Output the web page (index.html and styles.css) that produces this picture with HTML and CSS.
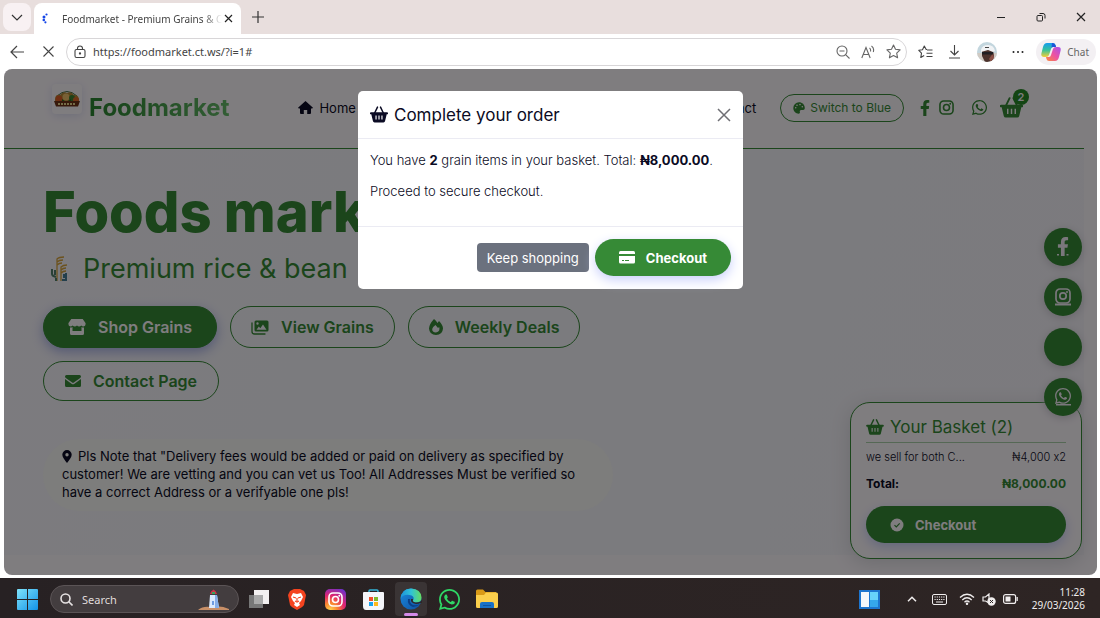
FILE: index.html
```html
<!DOCTYPE html>
<html lang="en">
<head>
<meta charset="utf-8">
<title>Foodmarket - Premium Grains</title>
<link rel="stylesheet" href="styles.css">
</head>
<body>
<svg class="defs" aria-hidden="true">
  <symbol id="basket" viewBox="0 0 24 22"><path d="M6.2 9 10 1.2M17.8 9 14 1.2" fill="none" stroke="currentColor" stroke-width="2" stroke-linecap="round"/><path fill="currentColor" fill-rule="evenodd" d="M1.2 8h21.600a1.200 1.200 0 0 1 0 2.800h-.5l-2.200 9a2.200 2.200 0 0 1-2.200 1.700H6.100a2.200 2.200 0 0 1-2.200-1.700l-2.200-9h-.5a1.200 1.200 0 0 1 0-2.800zM7.300 12.300v5.400h1.500v-5.400zM11.250 12.300v5.400h1.500v-5.400zM15.200 12.300v5.400h1.500v-5.400z"/></symbol>
  <symbol id="facebook" viewBox="0 0 320 512"><path fill="currentColor" d="M279.140 288l14.220-92.660h-88.910v-60.130c0-25.350 12.420-50.060 52.240-50.060h40.420V6.260S260.430 0 225.360 0c-73.220 0-121.080 44.380-121.080 124.720v70.620H22.890V288h81.390v224h100.170V288z"/></symbol>
  <symbol id="instagram" viewBox="0 0 16 16"><g fill="none" stroke="currentColor" stroke-width="1.700"><rect x="1" y="1" width="14" height="14" rx="4"/><circle cx="8" cy="8" r="3.200"/></g><circle cx="12" cy="4" r="1" fill="currentColor"/></symbol>
  <symbol id="whatsapp" viewBox="0 32 448 448"><path fill="currentColor" d="M380.900 97.100C339 55.100 283.200 32 223.900 32c-122.400 0-222 99.600-222 222 0 39.100 10.200 77.300 29.600 111L0 480l117.700-30.900c32.400 17.700 68.900 27 106.100 27h.1c122.300 0 224.100-99.600 224.100-222 0-59.300-25.200-115-67.100-157zm-157 341.600c-33.200 0-65.700-8.900-94-25.700l-6.700-4-69.800 18.300L72 359.200l-4.400-7c-18.500-29.400-28.200-63.300-28.200-98.200 0-101.700 82.800-184.500 184.600-184.500 49.300 0 95.600 19.200 130.400 54.100 34.800 34.900 56.200 81.200 56.100 130.500 0 101.800-84.900 184.600-186.600 184.600zm101.200-138.200c-5.500-2.800-32.800-16.200-37.900-18-5.100-1.900-8.800-2.800-12.500 2.800-3.700 5.600-14.300 18-17.600 21.800-3.200 3.700-6.500 4.200-12 1.400-32.600-16.300-54-29.100-75.500-66-5.700-9.800 5.700-9.100 16.300-30.300 1.800-3.700.9-6.900-.5-9.700-1.400-2.800-12.500-30.100-17.100-41.200-4.500-10.800-9.100-9.300-12.500-9.500-3.200-.2-6.900-.2-10.600-.2-3.700 0-9.700 1.400-14.800 6.900-5.100 5.600-19.400 19-19.400 46.300 0 27.300 19.900 53.700 22.600 57.400 2.800 3.700 39.100 59.700 94.800 83.800 35.200 15.200 49 16.500 66.600 13.900 10.700-1.600 32.800-13.400 37.400-26.400 4.600-13 4.600-24.100 3.200-26.400-1.300-2.500-5-3.900-10.500-6.600z"/></symbol>
</svg>

<header class="titlebar">
  <button class="tab-menu" aria-label="Tab actions"><svg width="12" height="12" viewBox="0 0 12 12" fill="none" stroke="#333" stroke-width="1.200"><path d="M1 4l5 5 5-5"/></svg></button>
  <div class="tab">
    <svg width="12" height="12" viewBox="0 0 12 12" fill="#1546e8"><circle cx="4.500" cy="1.500" r="1.100"/><circle cx="2" cy="4" r="1.500"/><circle cx="1.800" cy="7" r="1.300"/><circle cx="3.400" cy="9.300" r="1.100"/></svg>
    <span class="tab-title">Foodmarket - Premium Grains &amp; C</span>
    <button class="plain" aria-label="Close tab"><svg width="9" height="9" viewBox="0 0 9 9" fill="none" stroke="#222" stroke-width="1.200"><path d="M1 1l7 7M8 1L1 8"/></svg></button>
  </div>
  <button class="plain new-tab" aria-label="New tab"><svg width="14" height="14" viewBox="0 0 14 14" fill="none" stroke="#333" stroke-width="1.200"><path d="M7 1v12M1 7h12"/></svg></button>
  <div class="window-controls">
    <button class="plain" aria-label="Minimize"><svg width="10" height="10" viewBox="0 0 10 10" stroke="#222"><path d="M1 5.500h8"/></svg></button>
    <button class="plain" aria-label="Restore"><svg width="10" height="10" viewBox="0 0 10 10" fill="none" stroke="#222"><rect x="1" y="3.500" width="5.500" height="5.500" rx="1"/><path d="M3.500 1.500h3.500a2 2 0 0 1 2 2v3"/></svg></button>
    <button class="plain" aria-label="Close"><svg width="10" height="10" viewBox="0 0 10 10" fill="none" stroke="#222" stroke-width="1.200"><path d="M1 1l8 8M9 1L1 9"/></svg></button>
  </div>
</header>

<div class="toolbar">
  <button class="plain" aria-label="Back"><svg width="14" height="14" viewBox="0 0 14 14" fill="none" stroke="#444" stroke-width="1.200"><path d="M14 7H1M7 1L1 7l6 6"/></svg></button>
  <button class="plain stop" aria-label="Stop"><svg width="11" height="11" viewBox="0 0 11 11" fill="none" stroke="#444" stroke-width="1.100"><path d="M.5.5l10 10M10.500.5l-10 10"/></svg></button>
  <div class="address">
    <svg width="12" height="14" viewBox="0 0 12 14" fill="none" stroke="#444" stroke-width="1.100"><rect x="1" y="4.500" width="10" height="8" rx="1.500"/><path d="M3.500 4.500V3.500a2.500 2.500 0 0 1 5 0v1"/><circle cx="6" cy="8.500" r=".6" fill="#333"/></svg>
    <input class="url" type="text" value="https://foodmarket.ct.ws/?i=1#" aria-label="Address">
    <button class="plain" aria-label="Zoom out"><svg width="14" height="14" viewBox="0 0 14 14" fill="none" stroke="#666" stroke-width="1.100"><circle cx="6" cy="6" r="5"/><path d="M9.600 9.600L13.500 13.500M3.500 6h5"/></svg></button>
    <button class="plain" aria-label="Read aloud"><svg width="14" height="14" viewBox="0 0 14 14" fill="none" stroke="#666" stroke-width="1.100"><path d="M.8 13L5 2.500 9.200 13M2.200 9.500h5.600M8.500 3q1.500 1 1 3.500M10.500 1q3 2 1.800 6"/></svg></button>
    <button class="plain" aria-label="Favourite"><svg width="15" height="15" viewBox="0 0 15 15" fill="none" stroke="#666" stroke-width="1.100" stroke-linejoin="round"><path d="M7.500 1l2 4.300 4.600.6-3.400 3.200.9 4.700-4.100-2.300-4.100 2.300.9-4.700L.9 5.900l4.600-.6z"/></svg></button>
  </div>
  <div class="tools">
    <button class="plain" aria-label="Favourites"><svg width="15" height="14" viewBox="0 0 15 14" fill="none" stroke="#444" stroke-width="1.100" stroke-linejoin="round"><path d="M9 4.500L8.200 4.400 6.300 1 4.500 4.700.8 5.300l2.700 2.800L2.800 12.500l3.400-2M9 5h5.500M8.500 8.300h6M8.500 11.500h6"/></svg></button>
    <button class="plain" aria-label="Downloads"><svg width="14" height="15" viewBox="0 0 14 15" fill="none" stroke="#444" stroke-width="1.100"><path d="M6.500 1v10M2.500 7l4 4 4-4M1 14h11"/></svg></button>
    <button class="plain" aria-label="Profile"><svg width="20" height="20" viewBox="0 0 20 20"><defs><clipPath id="face"><circle cx="10" cy="10" r="10"/></clipPath></defs><g clip-path="url(#face)"><path fill="#c3d6de" d="M0 0h20v20H0z"/><path fill="#d0cac3" d="M0 11h20v9H0z"/><path fill="#4b322c" d="M5 8h11l1 6-2 6H8l-3-6z"/><path fill="#8b5148" d="M12 17l4-6 1 5-3 4z"/><path fill="#211f22" d="M5 10h11v2.500H5z"/><path fill="#f1f3f5" d="M4 8Q5 3 11 3t7 6l-2 1-5-2-7 2z"/><path fill="#444" d="M8 5h4v1H8z"/></g></svg></button>
    <button class="plain" aria-label="More"><svg width="12" height="4" viewBox="0 0 12 4" fill="#222"><circle cx="1.500" cy="2" r="1"/><circle cx="6" cy="2" r="1"/><circle cx="10.500" cy="2" r="1"/></svg></button>
    <button class="chat"><svg width="20" height="18" viewBox="0 0 20 18"><defs><linearGradient id="c1" x2="0" y2="1"><stop stop-color="#159cf0"/><stop offset=".5" stop-color="#35c29b"/><stop offset="1" stop-color="#f6cf35"/></linearGradient><linearGradient id="c2" x1="1" x2="0" y2="1"><stop stop-color="#a651ec"/><stop offset=".5" stop-color="#ec52a3"/><stop offset="1" stop-color="#fb8a3b"/></linearGradient></defs><path fill="url(#c1)" d="M6 0h6q2 0 2.500 2L15 4h-3q-1.500 0-2 2L8 12q-.5 2-3 2H3q-3.500 0-2.500-4L2 4q1-4 4-4z"/><path fill="url(#c2)" d="M14 18H8q-2 0-2.500-2L5 14h3q1.500 0 2-2l2-6q.5-2 3-2h2q3.500 0 2.500 4L18 14q-1 4-4 4z"/><path fill="#1b54d8" d="M11 0q2.500 0 3.500 2L15 4h-3q-1 0-1.500 1z"/></svg>Chat</button>
  </div>
</div>

<div class="page">
  <div class="content">
    <header class="site-header">
      <a class="brand" href="#">
        <span class="brand-logo"><svg width="28" height="16" viewBox="0 0 28 16"><path d="M4 5Q14-4 24 5" fill="none" stroke="#48714d"/><path fill="#b58a36" d="M2 9Q2 3 7 4q3-4 7-2 4-2 7 2 5-1 5 6v3H2z"/><circle cx="6" cy="8" r="3.500" fill="#dc5d24"/><circle cx="13" cy="6" r="3.500" fill="#f0c06a"/><circle cx="19" cy="7" r="3" fill="#3f8533"/><circle cx="23" cy="9" r="3" fill="#e16b2a"/><path fill="#2d6a26" d="M9 8l4 3 5-3v4H9z"/><path fill="#6e3217" d="M1 10h26l-2 5.500H3z"/><path d="M5 13h18" stroke="#ead98f" stroke-width="2" stroke-dasharray="2 1"/></svg></span>
        <span class="brand-name">Foodmarket</span>
      </a>
      <nav class="site-nav">
        <a href="#"><svg width="15" height="13" viewBox="0 0 15 13" fill="currentColor"><path d="M7.500 0L15 6.700l-.8.9H13V12a1 1 0 0 1-1 1H9.200V9H5.800v4H3a1 1 0 0 1-1-1V7.600H.8L0 6.700z"/></svg>Home</a>
        <a href="#">Contact</a>
      </nav>
      <button class="theme"><svg width="12" height="12" viewBox="0 0 12 12"><path fill="currentColor" fill-rule="evenodd" d="M6 .3A5.700 5.700 0 0 0 .3 6c0 3.200 2.500 5.700 5.400 5.700 1 0 1.500-.8 1.200-1.600C6.500 9 7 8 8.100 8h2c1 0 1.700-.7 1.700-2C11.800 2.700 9.200.3 6 .3zM2.700 5a.8.800 0 1 1 0 1.600.8.800 0 0 1 0-1.600zM4 2.400A.8.800 0 1 1 4 4a.8.800 0 0 1 0-1.600zM7 1.800a.8.800 0 1 1 0 1.600.8.800 0 0 1 0-1.600zM9.300 4a.8.800 0 1 1 0 1.600.8.800 0 0 1 0-1.600z"/></svg>Switch to Blue</button>
      <div class="header-social">
        <a href="#" aria-label="Facebook"><svg width="10" height="16"><use href="#facebook"/></svg></a>
        <a href="#" aria-label="Instagram"><svg width="15" height="15"><use href="#instagram"/></svg></a>
        <a class="wa" href="#" aria-label="WhatsApp"><svg width="15" height="15"><use href="#whatsapp"/></svg></a>
        <a class="header-basket" href="#" aria-label="Basket"><svg width="23" height="21"><use href="#basket"/></svg><span class="badge">2</span></a>
      </div>
    </header>
    <main class="hero">
      <h1>Foods mark</h1>
      <p class="lead"><svg width="18" height="26" viewBox="0 0 18 26" fill="none" stroke-width="1.300"><g stroke="#d8a53d"><path d="M7 25V3q2-2 7-2M7 6q2-2 6-2M7 9q2-2 5-2M11 25V11q2-2 6-2M11 14q2-2 5-2M11 17q2-2 5-2"/></g><path stroke="#52806c" stroke-width="2" d="M2 13v5q0 2 4 3M5 14v5M6 22v3"/><path stroke="#477e98" stroke-width="2" d="M16 17v7h-4M14 18v4"/></svg>Premium rice &amp; bean</p>
      <div class="actions">
        <a class="pill solid" href="#"><svg width="18" height="16" viewBox="0 0 18 16" fill="currentColor"><path d="M3.300 0h11.400L17.500 4q.6 3-2 3.500-1.500 0-2.200-1-1 1-2.200 1T9 6.500Q8 7.500 6.800 7.500T4.600 6.500q-.8 1-2.200 1Q0 7 .5 4zM2 8.500q1.500.2 2.500-.5v4h9V8q1 .7 2.500.5v6q0 1.500-1.500 1.500h-11Q2 16 2 14.500z"/></svg>Shop Grains</a>
        <a class="pill" href="#"><svg width="18" height="15" viewBox="0 0 18 15"><path fill="none" stroke="currentColor" stroke-width="1.300" stroke-linecap="round" d="M1 3v8.500Q1 14 3.500 14H14"/><path fill="currentColor" fill-rule="evenodd" d="M5 .5h11q1.500 0 1.500 1.500v8q0 1.500-1.500 1.500H5Q3.500 11.500 3.500 10V2Q3.500.5 5 .5zM5.500 9.700h10L12 4.500 9.300 8.300 7.800 6.500zM6.500 2.300a1.200 1.200 0 1 0 0 2.400 1.200 1.200 0 0 0 0-2.400z"/></svg>View Grains</a>
        <a class="pill" href="#"><svg width="14" height="16" viewBox="0 0 14 16"><path fill="currentColor" fill-rule="evenodd" d="M5 0q2 1.500 3.500 4L10 2q4 4 4 7.500Q13.500 16 7 16T0 9.500Q0 5.500 5 0zM6.500 6L9 9l1.200-1q1.300 4.500-3.200 5.500-4-.4-3.800-3.500Q3.500 8 6.500 6z"/></svg>Weekly Deals</a>
        <a class="pill compact" href="#"><svg width="16" height="12" viewBox="0 0 16 12" fill="currentColor"><path d="M1.500 0h13Q16 0 16 1.500 16 2.300 15.200 3L8.800 7.600q-.8.600-1.600 0L.8 3Q0 2.300 0 1.500 0 0 1.500 0zM0 4l6.500 4.700q1.500 1 3 0L16 4v6.500q0 1.500-1.500 1.500h-13Q0 12 0 10.500z"/></svg>Contact Page</a>
      </div>
      <p class="note"><svg width="10" height="13" viewBox="0 0 10 13"><path fill="currentColor" fill-rule="evenodd" d="M5 0a4.700 4.700 0 0 1 4.700 4.700C9.700 7 7 10.500 5 13 3 10.500.3 7 .3 4.700A4.700 4.700 0 0 1 5 0zM5 3a1.700 1.700 0 1 0 0 3.400A1.700 1.700 0 0 0 5 3z"/></svg>Pls Note that "Delivery fees would be added or paid on delivery as specified by customer! We are vetting and you can vet us Too! All Addresses Must be verified so have a correct Address or a verifyable one pls!</p>
    </main>
  </div>

  <aside class="basket-card">
    <h2><svg width="18" height="16"><use href="#basket"/></svg>Your Basket (2)</h2>
    <div class="row item"><span>we sell for both C...</span><span>₦4,000 x2</span></div>
    <div class="row total"><span>Total:</span><span class="sum">₦8,000.00</span></div>
    <button class="cta wide"><svg width="14" height="14" viewBox="0 0 14 14"><circle cx="7" cy="7" r="6.500" fill="currentColor"/><path d="M4.500 7.200L6.300 9l3.400-3.600" fill="none" stroke="#368a36" stroke-width="1.200"/></svg>Checkout</button>
  </aside>

  <div class="social-rail">
    <a href="#" aria-label="Facebook"><svg width="18" height="20" viewBox="0 0 18 20"><use href="#facebook" x="3" y="0" width="12" height="19"/><path fill="currentColor" d="M3 17h2v1.500H3zM12.500 17h2v1.500h-2z"/></svg></a>
    <a href="#" aria-label="Instagram"><svg width="18" height="18" viewBox="0 0 18 18"><use href="#instagram" x="1" y="0" width="16" height="16"/><path fill="currentColor" d="M1 15.500h16V17.500H1z"/></svg></a>
    <a href="#" aria-label="More"></a>
    <a href="#" aria-label="WhatsApp"><svg width="18" height="18" viewBox="0 0 18 18"><use href="#whatsapp" x="1" y="0" width="16" height="16"/><path fill="currentColor" d="M2 16h15v1.500H2z"/></svg></a>
  </div>

  <div class="backdrop"></div>
  <section class="modal" role="dialog" aria-labelledby="modal-title">
    <header class="modal-head">
      <h2 id="modal-title"><svg width="18" height="17"><use href="#basket"/></svg>Complete your order</h2>
      <button class="plain" aria-label="Close"><svg width="14" height="14" viewBox="0 0 14 14" fill="none" stroke="#6f6f74" stroke-width="1.500"><path d="M1 1l12 12M13 1L1 13"/></svg></button>
    </header>
    <div class="modal-body">
      <p>You have <strong>2</strong> grain items in your basket. Total: <strong>₦8,000.00</strong>.</p>
      <p>Proceed to secure checkout.</p>
    </div>
    <footer class="modal-foot">
      <button class="keep">Keep shopping</button>
      <button class="cta"><svg width="16" height="13" viewBox="0 0 16 13" fill="currentColor"><path d="M1.500 0h13Q16 0 16 1.500V3H0V1.500Q0 0 1.500 0z"/><path fill-rule="evenodd" d="M0 5h16v6q0 1.500-1.500 1.500h-13Q0 12.500 0 11zM3 9v1h2V9zM6 9v1h4V9z"/></svg>Checkout</button>
    </footer>
  </section>
</div>

<footer class="taskbar">
  <button class="plain" aria-label="Start"><svg width="21" height="21" viewBox="0 0 21 21"><defs><linearGradient id="win" x2="1" y2="1"><stop stop-color="#7fe3fb"/><stop offset="1" stop-color="#1292e8"/></linearGradient></defs><path fill="url(#win)" d="M1 0h9v10H0V1q0-1 1-1zM11 0h9q1 0 1 1v9H11zM0 11h10v10H1q-1 0-1-1zM11 11h10v9q0 1-1 1h-9z"/></svg></button>
  <div class="search">
    <svg width="13" height="13" viewBox="0 0 13 13" fill="none" stroke="#e6e2e2" stroke-width="1.600"><circle cx="5.500" cy="5.500" r="4.500"/><path d="M8.800 8.800l3.700 3.700"/></svg>
    <input type="text" placeholder="Search" aria-label="Search">
    <svg width="31" height="21" viewBox="0 0 31 21"><path fill="#c88f67" d="M0 21q5-4 12-3 11-2 19 2v1z"/><path fill="#dceafd" d="M12 6h7l2 13H11z"/><path fill="#86aee8" d="M17 6h2l2 13h-4z"/><path fill="#cf3346" d="M12 5q.5-3 3.500-4.500Q18.500 2 19 5z"/><path fill="#3aa35d" d="M14 3h3v2h-3z"/><path fill="#6e9be0" d="M14 12h2v4h-2z"/></svg>
  </div>
  <div class="apps">
    <button class="app" aria-label="Task view"><svg width="22" height="20" viewBox="0 0 22 20"><path fill="#f3f0f0" d="M6 1h15v14H6z"/><path fill="#777" d="M1 6h14v13H1z"/><path fill="#aaa" d="M6 6h9v9H6z"/></svg></button>
    <button class="app" aria-label="Brave"><svg width="18" height="21" viewBox="0 0 18 21"><path fill="#f4431f" d="M4 1l2-1h6l2 1 2 1 2 4-2 10q-1 2-7 5-6-3-7-5L0 6l2-4z"/><path fill="#fff" d="M5 4l4 1 4-1 2 4-2 4-2 2 1 2-3 2-3-2 1-2-2-2-2-4z"/><path stroke="#f4431f" fill="none" stroke-width="1.200" d="M5 8l3 1M13 8l-3 1M9 9v3M7 12l2 1 2-1"/></svg></button>
    <button class="app" aria-label="Instagram"><svg width="21" height="21" viewBox="0 0 21 21"><defs><radialGradient id="ig" cx=".25" cy="1" r="1.150"><stop stop-color="#ffd44f"/><stop offset=".3" stop-color="#f98430"/><stop offset=".6" stop-color="#e1246f"/><stop offset="1" stop-color="#6a32cf"/></radialGradient></defs><rect width="21" height="21" rx="5" fill="url(#ig)"/><g fill="none" stroke="#fff" stroke-width="1.600"><rect x="4" y="4" width="13" height="13" rx="4"/><circle cx="10.500" cy="10.500" r="3"/></g><circle cx="14.300" cy="6.700" r="1" fill="#fff"/></svg></button>
    <button class="app" aria-label="Store"><svg width="21" height="21" viewBox="0 0 21 21"><path d="M6 5V2q0-1 1-1h7q1 0 1 1v3" fill="none" stroke="#33b4d8" stroke-width="1.500"/><path fill="#f5f6fa" d="M1 3h19q1 0 1 1v13q0 4-3 4H3q-3 0-3-4V4q0-1 1-1z"/><path fill="#f04f2a" d="M6 8h4v4H6z"/><path fill="#7fba2c" d="M11 8h4v4h-4z"/><path fill="#19a4ef" d="M6 13h4v4H6z"/><path fill="#ffb91b" d="M11 13h4v4h-4z"/></svg></button>
    <button class="app active" aria-label="Edge"><svg width="22" height="22" viewBox="0 0 22 22"><defs><linearGradient id="e1" x2="1"><stop stop-color="#1c91dc"/><stop offset=".5" stop-color="#2fc2d8"/><stop offset="1" stop-color="#64dd62"/></linearGradient><linearGradient id="e2" x2="1" y2="1"><stop stop-color="#1a8be0"/><stop offset="1" stop-color="#0f4f9e"/></linearGradient></defs><circle cx="11" cy="11" r="10.500" fill="url(#e2)"/><path fill="url(#e1)" d="M.5 11Q1 1 11 .5q10 .5 10.500 9 0 5-6 5-4-.5-2-3 1-4-4-4.500Q3 6 .5 11z"/><path fill="#0b3f86" d="M8 11q-1 6 5 8 4 0 7-3-3 2-7 1-4-2-3-6z"/><path fill="#2d2829" d="M11 11q-1 4 5 5 3 0 4-1l2 0v-3q-2 3-6.500 2.500Q12 14 13 11z"/></svg></button>
    <button class="app" aria-label="WhatsApp"><svg class="wa-app" width="21" height="21"><use href="#whatsapp"/></svg></button>
    <button class="app" aria-label="Files"><svg width="22" height="20" viewBox="0 0 22 20"><path fill="#d99a17" d="M0 2q0-1.500 1.500-1.500H7L9.500 3H20v6H0z"/><path fill="#fbcf4c" d="M0 6h8l2-2.500h10.500Q22 3.500 22 5v12.500q0 1.500-1.500 1.500h-19Q0 19 0 17.500z"/><path fill="#1771c9" d="M4 19v-4q0-2 2-2h10q2 0 2 2v4z"/><path fill="#0f559f" d="M7 16h8v1H7z"/></svg></button>
  </div>
  <div class="tray">
    <svg class="widgets" width="21" height="19" viewBox="0 0 21 19"><path fill="#1d75cf" d="M0 0h21v19H0z"/><path fill="#f4f7fb" d="M2 2h8v15H2z"/><path fill="#67d2fa" d="M11 2h8v8h-8z"/><path fill="#35a7eb" d="M11 10h8v7h-8z"/></svg>
    <svg class="caret" width="10" height="6" viewBox="0 0 10 6" fill="none" stroke="#f0eded" stroke-width="1.500"><path d="M1 5.200L5 1.200l4 4"/></svg>
    <svg class="keyboard" width="15" height="11" viewBox="0 0 15 11" fill="none" stroke="#f0eded"><rect x=".5" y=".5" width="14" height="10" rx="1.500"/><path d="M2.500 3h10M2.500 5.500h10" stroke-dasharray="1.200 1"/><path d="M4 8h7"/></svg>
    <svg width="16" height="12" viewBox="0 0 16 12" fill="none" stroke="#f0eded" stroke-width="1.300"><path d="M1 4.500q7-6.500 14 0M3.300 7q4.700-4.500 9.400 0M5.500 9.200q2.500-2.500 5 0"/><circle cx="8" cy="10.800" r=".6" fill="#f0eded"/></svg>
    <svg width="14" height="13" viewBox="0 0 14 13"><path d="M1 4h2.500L7 1v9L3.500 8H1z" fill="none" stroke="#f0eded" stroke-width="1.200"/><circle cx="9.500" cy="8.500" r="4.200" fill="#f0eded"/><path d="M8 7l3 3M11 7l-3 3" stroke="#2d2524"/></svg>
    <svg width="15" height="10" viewBox="0 0 15 10"><rect x=".6" y=".6" width="12" height="8.800" rx="2" fill="none" stroke="#f0eded" stroke-width="1.200"/><path fill="#f0eded" d="M2.500 2.500h5v5h-5zM13.500 3h1.300v4h-1.300z"/></svg>
    <div class="clock"><span>11:28</span><span>29/03/2026</span></div>
  </div>
</footer>
</body>
</html>
```
FILE: styles.css
```css
* { box-sizing: border-box; }

:root {
  --green: #368a36;
  --ink: #0b0b24;
  --site: Inter, "Open Sans", sans-serif;
  --system: "Noto Sans", "Open Sans", sans-serif;
}

body {
  margin: 0;
  min-height: 100vh;
  display: flex;
  flex-direction: column;
  background: #fff;
  font-family: var(--system);
  font-size: 10px;
  color: #444;
}

svg { display: block; flex: none; }
.defs { position: absolute; width: 0; height: 0; }
h1, h2, p { margin: 0; }
a { color: inherit; text-decoration: none; }
button, input { font: inherit; color: inherit; }
button { cursor: pointer; }
.plain { border: 0; padding: 0; background: none; display: flex; }

/* Browser frame */
.titlebar { display: flex; align-items: center; height: 34px; padding-left: 3px; background: #e8dedd; }
.tab-menu { width: 28px; height: 28px; border: 0; border-radius: 8px; background: #f8f1f3; display: grid; place-items: center; }
.tab { align-self: flex-end; display: flex; align-items: center; width: 207px; height: 31px; margin-left: 3px; padding: 0 10px 0 8px; background: #fff; border-radius: 8px 8px 0 0; }
.tab-title { flex: 1; margin: 0 2px 0 8px; white-space: nowrap; mask-image: linear-gradient(90deg, #000 88%, transparent); }
.new-tab { margin-left: 10px; }
.window-controls { display: flex; gap: 30px; margin-left: auto; padding-right: 14px; }

.toolbar { display: flex; align-items: center; height: 35px; padding: 0 4px 0 10px; background: #fff; }
.stop { margin-left: 19px; }
.address { flex: 1; display: flex; align-items: center; gap: 11px; height: 28px; margin: 0 11px 0 12px; padding: 0 5px 0 7px; border: 1px solid #d8d6d8; border-radius: 14px; }
.url { flex: 1; min-width: 0; border: 0; padding: 0; margin-left: -4px; background: none; font-size: 11px; outline: 0; }
.tools { display: flex; align-items: center; gap: 15px; }
.chat { display: flex; align-items: center; gap: 6px; height: 26px; margin-left: -3px; padding: 0 7px 0 5px; border: 0; border-radius: 13px; background: #f3f0f3; color: #666; }

/* Web page */
.page { position: relative; flex: 1; margin: 0 3px 3px 4px; overflow: hidden; border-radius: 8px; background: #fffaff; font-family: var(--site); font-feature-settings: "calt" 0; color: var(--ink); }
.content { height: 100%; margin-right: 13px; background: #fafafa; }
.site-header { display: flex; align-items: center; height: 80px; padding: 0 61px 2px 48px; background: #fffaff; border-bottom: 1px solid var(--green); }
.brand { display: flex; align-items: center; gap: 7px; }
.brand-logo { display: grid; place-items: center; width: 30px; height: 30px; margin-bottom: 18px; border-radius: 4px; background: #fffaff; box-shadow: 0 2px 8px #dfdff4; }
.brand-name { font-size: 24px; font-weight: 700; line-height: 30px; color: transparent; background: linear-gradient(90deg, #2a8530, #66bb6a); background-clip: text; }
.site-nav { flex: 1; display: flex; justify-content: space-between; margin: 0 24px 0 69px; font-size: 13px; }
.site-nav a { display: flex; align-items: center; gap: 6px; }
.theme { display: flex; align-items: center; justify-content: center; gap: 5px; height: 28px; padding: 0 12px; border: 1px solid var(--green); border-radius: 14px; background: none; color: var(--green); font-size: 12px; }
.header-social { display: flex; align-items: center; gap: 9px; margin-left: 16px; color: var(--green); }
.wa { margin-left: 9px; }
.header-basket { position: relative; margin-left: 4px; }
.badge { position: absolute; top: -8px; right: -6px; width: 16px; height: 16px; border-radius: 50%; background: #268a26; color: #fffaff; font-size: 11px; font-weight: 600; line-height: 16px; text-align: center; }

.hero { padding: 33px 39px 44px; background: linear-gradient(110deg, #f9f6fe, #f6f7fc 45%, #f8f5fc); color: var(--green); }
h1 { font-size: 56px; font-weight: 800; line-height: 60px; }
.lead { display: flex; align-items: center; gap: 15px; margin-top: 9px; padding-left: 7px; font-size: 27px; line-height: 36px; }
.actions { display: flex; flex-wrap: wrap; gap: 13px; max-width: 560px; margin-top: 19px; }
.pill { display: flex; align-items: center; gap: 12px; height: 42px; padding: 0 20px; border: 1px solid var(--green); border-radius: 21px; font-size: 16px; font-weight: 600; }
.pill.solid { padding: 0 24px; background: var(--green); color: #fffaff; box-shadow: 0 4px 12px #a9b2e8; }
.pill.compact { height: 40px; padding: 0 21px; }
.note { max-width: 570px; margin-top: 38px; padding: 8px 19px 10px; border-radius: 36px; background: #fafaf8; color: var(--ink); font-size: 13px; line-height: 18px; }
.note svg { display: inline-block; margin-right: 6px; vertical-align: -2px; }

.basket-card { position: absolute; right: 15px; bottom: 16px; width: 232px; padding: 14px 15px 15px; border: 1px solid var(--green); border-radius: 20px; background: #fffaff; box-shadow: 0 4px 20px #d8d6dd; }
.basket-card h2 { display: flex; align-items: center; gap: 6px; padding-bottom: 5px; border-bottom: 1px solid #abd0ab; color: var(--green); font-size: 17px; font-weight: 400; line-height: 20px; }
.row { display: flex; justify-content: space-between; }
.item { margin-top: 6px; font-size: 11px; font-weight: 300; line-height: 16px; }
.total { margin-top: 10px; font-size: 12px; font-weight: 700; line-height: 18px; }
.sum { color: var(--green); }
.cta { display: flex; align-items: center; gap: 11px; height: 37px; padding: 0 24px; border: 0; border-radius: 19px; background: var(--green); color: #fff; font-size: 13px; font-weight: 700; box-shadow: 0 4px 12px #c9d0fb; }
.cta.wide { width: 100%; margin-top: 13px; color: #fffaff; }

.social-rail { position: absolute; right: 15px; bottom: 159px; display: grid; gap: 12px; }
.social-rail a { display: grid; place-items: center; width: 38px; height: 38px; border-radius: 50%; background: var(--green); color: #f4eef8; box-shadow: 0 2px 8px #cfcbd5; }

.backdrop { position: absolute; inset: 0; background: rgba(0, 0, 0, .5); }

.modal { position: absolute; top: 22px; left: 0; right: 0; width: 385px; max-width: 100%; margin: 0 auto; border-radius: 5px; background: #fff; }
.modal-head { display: flex; align-items: center; justify-content: space-between; height: 48px; padding: 0 12px; border-bottom: 1px solid #ebebf3; }
.modal-head h2 { display: flex; align-items: center; gap: 6px; font-size: 17px; font-weight: 400; }
.modal-body { padding: 11px 12px 24px; border-bottom: 1px solid #ebebf3; font-size: 13px; font-weight: 300; line-height: 21px; }
.modal-body p + p { margin-top: 10px; }
.modal-body strong { font-weight: 700; }
.modal-foot { display: flex; align-items: center; justify-content: flex-end; gap: 6px; padding: 12px 12px 13px; }
.keep { height: 29px; padding: 0 10px; border: 0; border-radius: 4px; background: #6b717e; color: #fff; font-size: 13px; }

/* Taskbar */
.taskbar { display: flex; align-items: center; height: 40px; padding: 2px 15px 0 17px; background: linear-gradient(90deg, #272123, #2e2524); color: #f0eded; }
.search { display: flex; align-items: center; width: 189px; height: 28px; margin-left: 12px; padding: 0 9px; border: 1px solid #5b5456; border-radius: 14px; background: #433d3f; }
.search input { flex: 1; min-width: 0; border: 0; padding: 0; margin-left: 9px; background: none; font-size: 11px; outline: 0; }
.search input::placeholder { color: #e0dcdc; opacity: 1; }
.apps { display: flex; gap: 6px; margin-left: 4px; }
.app { position: relative; display: grid; place-items: center; width: 32px; height: 34px; padding: 0; border: 0; border-radius: 4px; background: none; }
.active { background: #3a3435; }
.active::after { content: ""; position: absolute; bottom: 0; left: 9px; width: 14px; height: 3px; border-radius: 2px; background: #d48be8; }
.wa-app { color: #2fd866; }
.tray { display: flex; align-items: center; gap: 7px; margin-left: auto; }
.widgets { margin-right: 20px; }
.caret { margin-right: 8px; }
.keyboard { margin-right: 5px; }
.clock { display: grid; margin-left: 7px; line-height: 13px; text-align: right; }
```
